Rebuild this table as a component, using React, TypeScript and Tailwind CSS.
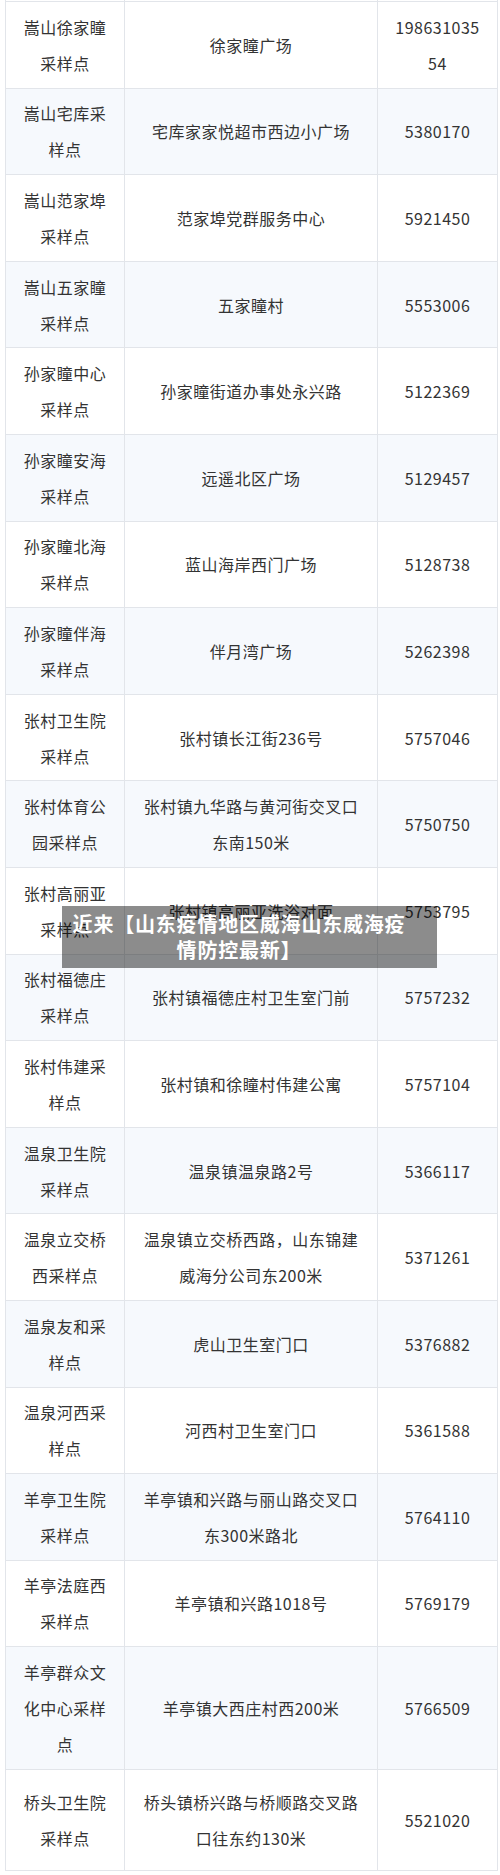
import React from 'react';

type Row = { name: string; addr: string; phone: string };

const rows: Row[] = [
  { name: '嵩山徐家瞳采样点', addr: '徐家瞳广场', phone: '19863103554' },
  { name: '嵩山宅库采样点', addr: '宅库家家悦超市西边小广场', phone: '5380170' },
  { name: '嵩山范家埠采样点', addr: '范家埠党群服务中心', phone: '5921450' },
  { name: '嵩山五家瞳采样点', addr: '五家瞳村', phone: '5553006' },
  { name: '孙家瞳中心采样点', addr: '孙家瞳街道办事处永兴路', phone: '5122369' },
  { name: '孙家瞳安海采样点', addr: '远遥北区广场', phone: '5129457' },
  { name: '孙家瞳北海采样点', addr: '蓝山海岸西门广场', phone: '5128738' },
  { name: '孙家瞳伴海采样点', addr: '伴月湾广场', phone: '5262398' },
  { name: '张村卫生院采样点', addr: '张村镇长江街236号', phone: '5757046' },
  { name: '张村体育公园采样点', addr: '张村镇九华路与黄河街交叉口东南150米', phone: '5750750' },
  { name: '张村高丽亚采样点', addr: '张村镇高丽亚洗浴对面', phone: '5753795' },
  { name: '张村福德庄采样点', addr: '张村镇福德庄村卫生室门前', phone: '5757232' },
  { name: '张村伟建采样点', addr: '张村镇和徐瞳村伟建公寓', phone: '5757104' },
  { name: '温泉卫生院采样点', addr: '温泉镇温泉路2号', phone: '5366117' },
  { name: '温泉立交桥西采样点', addr: '温泉镇立交桥西路，山东锦建威海分公司东200米', phone: '5371261' },
  { name: '温泉友和采样点', addr: '虎山卫生室门口', phone: '5376882' },
  { name: '温泉河西采样点', addr: '河西村卫生室门口', phone: '5361588' },
  { name: '羊亭卫生院采样点', addr: '羊亭镇和兴路与丽山路交叉口东300米路北', phone: '5764110' },
  { name: '羊亭法庭西采样点', addr: '羊亭镇和兴路1018号', phone: '5769179' },
  { name: '羊亭群众文化中心采样点', addr: '羊亭镇大西庄村西200米', phone: '5766509' },
  { name: '桥头卫生院采样点', addr: '桥头镇桥兴路与桥顺路交叉路口往东约130米', phone: '5521020' },
];

const font = { fontFamily: '"Noto Sans CJK SC", "Noto Sans", sans-serif' };

function Cell({ children, last }: { children: React.ReactNode; last?: boolean }) {
  return (
    <div
      className={
        'flex items-center justify-center text-center px-[15px] border-r border-[#e2e5ea] break-all ' +
        (last ? 'py-[14px]' : 'py-[6.8px]')
      }
    >
      <span>{children}</span>
    </div>
  );
}

export default function App() {
  return (
    <div className="relative w-[500px] h-[1875px] bg-white overflow-hidden" style={font}>
      <div className="ml-[5px] w-[493px] border-l border-[#e2e5ea] text-[16px] leading-[36px] tracking-[0.5px] text-[#333]">
        {/* sliver of the row above */}
        <div className="grid grid-cols-[119px_253px_120px] h-[2px] border-b border-[#e2e5ea]">
          <div className="border-r border-[#e2e5ea]" />
          <div className="border-r border-[#e2e5ea]" />
          <div className="border-r border-[#e2e5ea]" />
        </div>
        {rows.map((r, i) => {
          const last = i === rows.length - 1;
          return (
            <div
              key={r.name}
              className={
                'grid grid-cols-[119px_253px_120px] border-b border-[#e2e5ea] ' +
                (i % 2 === 1 ? 'bg-[#f6f9fd]' : 'bg-white')
              }
            >
              <Cell last={last}>{r.name}</Cell>
              <Cell last={last}>{r.addr}</Cell>
              <Cell last={last}>{r.phone}</Cell>
            </div>
          );
        })}
      </div>

      {/* title overlay */}
      <div className="absolute left-[62px] top-[906px] w-[375px] h-[62px] bg-[rgba(0,0,0,0.45)] flex items-center pl-[7px] pr-[28px]">
        <div className="w-full text-center text-white font-bold text-[20px] leading-[26px] tracking-[0.8px]">
          近来【山东疫情地区威海山东威海疫情防控最新】
        </div>
      </div>
    </div>
  );
}
